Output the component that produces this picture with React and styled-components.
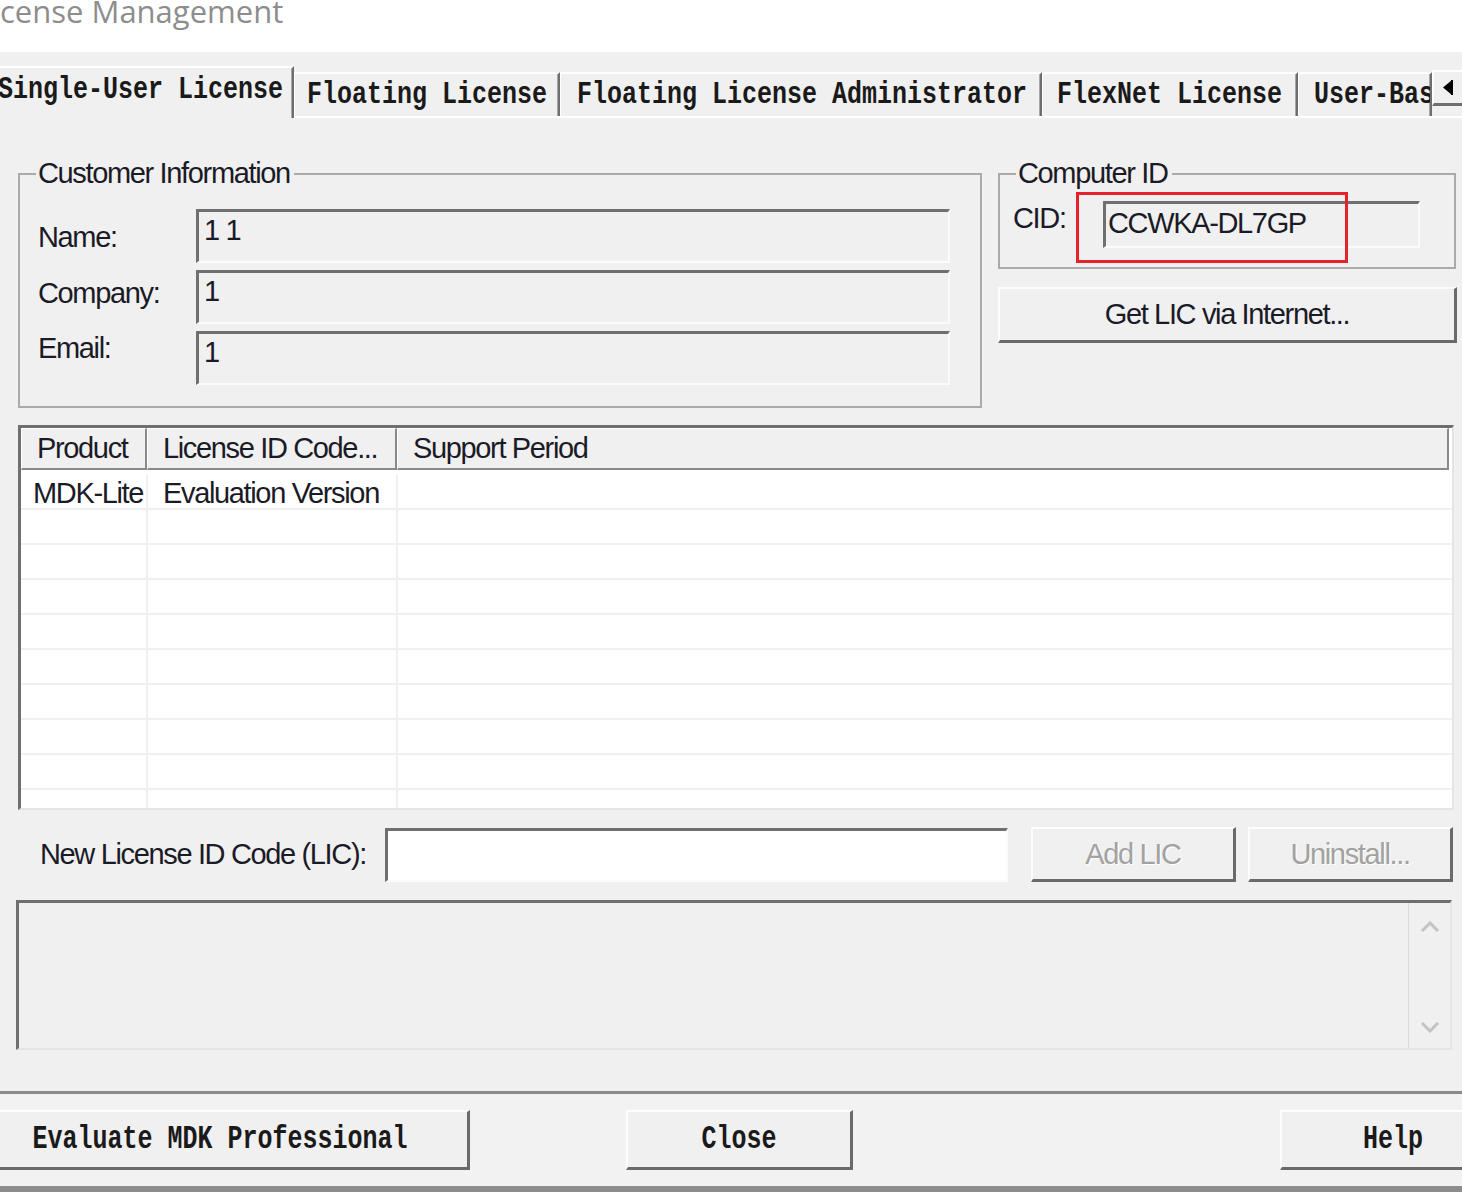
import React from 'react'
import styled, { createGlobalStyle } from 'styled-components'

const UI_FONT = '"Liberation Sans", Arial, sans-serif'
const RASTER_FONT = '"Liberation Mono", "Courier New", monospace'

const GlobalStyle = createGlobalStyle`
  html, body {
    margin: 0;
    padding: 0;
    background: #f0f0f0;
  }
  body {
    font-family: ${UI_FONT};
    overflow: hidden;
  }
`

const tabs = [
  { label: 'Single-User License', w: 306, pad: 9, active: true },
  { label: 'Floating License', w: 266, pad: 12 },
  { label: 'Floating License Administrator', w: 482, pad: 16 },
  { label: 'FlexNet License', w: 256, pad: 14 },
  { label: 'User-Based License', w: 134, pad: 15 }
]

const rows = [
  ['MDK-Lite', 'Evaluation Version', ''],
  ['', '', ''],
  ['', '', ''],
  ['', '', ''],
  ['', '', ''],
  ['', '', ''],
  ['', '', ''],
  ['', '', ''],
  ['', '', ''],
  ['', '', '']
]

const App = () => {
  return (
    <Page>
      <GlobalStyle />
      <TitleBar>
        <Title>cense Management</Title>
      </TitleBar>

      <TabStrip>
        {tabs.map(t => (
          <Tab key={t.label} $w={t.w} $pad={t.pad} $active={t.active}>
            <RasterText $sy={1.22}>{t.label}</RasterText>
          </Tab>
        ))}
        <TabScroll>
          <svg width="11" height="15" viewBox="0 0 11 15">
            <polygon points="10,0 10,15 1,7.5" fill="#000" />
            <rect x="9" y="0" width="2" height="15" fill="#000" />
          </svg>
        </TabScroll>
      </TabStrip>

      <Panel>
        <TopRow>
          <GroupBox $w={964} $pl={18} $pr={30} $pb={21}>
            <Legend $lm={-2}>Customer Information</Legend>
            <FormGrid>
              <FormRow>
                <FieldLabel $w={158} $dy={14}>Name:</FieldLabel>
                <Field $w={754} $h={54}>1 1</Field>
              </FormRow>
              <FormRow>
                <FieldLabel $w={158} $dy={9}>Company:</FieldLabel>
                <Field $w={754} $h={54}>1</Field>
              </FormRow>
              <FormRow>
                <FieldLabel $w={158} $dy={3}>Email:</FieldLabel>
                <Field $w={754} $h={54}>1</Field>
              </FormRow>
            </FormGrid>
          </GroupBox>

          <RightCol>
            <GroupBox $w={458} $pl={13} $pr={0} $pb={19}>
              <Legend $lm={3}>Computer ID</Legend>
              <CidRow>
                <FieldLabel $w={90} $dy={3}>CID:</FieldLabel>
                <CidWrap>
                  <Field $w={317} $h={47} $pt={5} $pl={2}>CCWKA-DL7GP</Field>
                  <Highlight />
                </CidWrap>
              </CidRow>
            </GroupBox>
            <Button $w={459} $h={56}>Get LIC via Internet...</Button>
          </RightCol>
        </TopRow>

        <ListView>
          <ListHeader>
            <HeaderCell $w={126}>Product</HeaderCell>
            <HeaderCell $w={250}>License ID Code...</HeaderCell>
            <HeaderCell $w={1052}>Support Period</HeaderCell>
          </ListHeader>
          <ListBody>
            {rows.map((r, i) => (
              <Row key={i} $first={i === 0}>
                <Cell $w={127} $pl={12}>{r[0]}</Cell>
                <Cell $w={250} $pl={15}>{r[1]}</Cell>
                <Cell $pl={15} $last>{r[2]}</Cell>
              </Row>
            ))}
          </ListBody>
        </ListView>

        <LicRow>
          <LicLabel>New License ID Code (LIC):</LicLabel>
          <Field $w={623} $h={54} $white />
          <Button $w={205} $h={55} $ml={23} disabled>Add LIC</Button>
          <Button $w={205} $h={55} $ml={12} disabled>Uninstall...</Button>
        </LicRow>

        <MessageBox>
          <MessageText />
          <ScrollBar>
            <svg width="20" height="12" viewBox="0 0 20 12">
              <polyline points="2,10 10,2 18,10" fill="none" stroke="#c3c3c3" strokeWidth="3" />
            </svg>
            <svg width="20" height="12" viewBox="0 0 20 12">
              <polyline points="2,2 10,10 18,2" fill="none" stroke="#c3c3c3" strokeWidth="3" />
            </svg>
          </ScrollBar>
        </MessageBox>
      </Panel>

      <Footer>
        <Button $w={499} $h={60} $ml={-29}>
          <RasterText $sy={1.32}>Evaluate MDK Professional</RasterText>
        </Button>
        <Button $w={227} $h={60} $ml={156}>
          <RasterText $sy={1.32}>Close</RasterText>
        </Button>
        <Button $w={227} $h={60} $ml={427}>
          <RasterText $sy={1.32}>Help</RasterText>
        </Button>
      </Footer>
    </Page>
  )
}

const Page = styled.div`
  width: 1462px;
  height: 1192px;
  overflow: hidden;
  display: flex;
  flex-direction: column;
  background: #f0f0f0;
  color: #1b1b27;
  font-size: 29px;
  line-height: 29px;
  letter-spacing: -1.35px;
`

const TitleBar = styled.div`
  flex: none;
  height: 52px;
  background: #fff;
  overflow: hidden;
`

const Title = styled.div`
  margin-top: -4px;
  font-family: "Open Sans", "Noto Sans", sans-serif;
  font-size: 31px;
  line-height: 31px;
  letter-spacing: 0;
  color: #8d8d8d;
  white-space: nowrap;
`

const TabStrip = styled.div`
  flex: none;
  display: flex;
  align-items: flex-end;
  height: 50px;
  margin: 14px 0 0 -12px;
  border-bottom: 2px solid #fff;
`

const Tab = styled.div`
  flex: none;
  box-sizing: border-box;
  width: ${p => p.$w}px;
  height: ${p => (p.$active ? 52 : 44)}px;
  margin-bottom: ${p => (p.$active ? -2 : 0)}px;
  padding: 0 0 ${p => (p.$active ? 6 : 0)}px ${p => p.$pad}px;
  display: flex;
  align-items: center;
  overflow: hidden;
  white-space: nowrap;
  background: #f0f0f0;
  border-top: 2px solid #fff;
  border-left: 1px solid #fff;
  border-right: 2px solid #6e6e6e;
  box-shadow: inset -1px 0 #a8a8a8;
`

const RasterText = styled.span`
  display: inline-block;
  font-family: ${RASTER_FONT};
  font-size: 25px;
  line-height: 25px;
  font-weight: 700;
  letter-spacing: 0;
  color: #1a1a1a;
  white-space: nowrap;
  transform: scaleY(${p => p.$sy || 1.2});
`

const TabScroll = styled.div`
  flex: none;
  align-self: flex-start;
  box-sizing: border-box;
  width: 30px;
  height: 36px;
  margin-top: 4px;
  padding-right: 2px;
  display: flex;
  align-items: center;
  justify-content: center;
  background: #f0f0f0;
  border-top: 2px solid #fff;
  border-left: 2px solid #fff;
  border-bottom: 3px solid #6e6e6e;
`

const Panel = styled.div`
  flex: none;
  box-sizing: border-box;
  height: 976px;
  padding: 41px 0 0 18px;
  display: flex;
  flex-direction: column;
  border-bottom: 3px solid #8a8a8a;
`

const TopRow = styled.div`
  display: flex;
  align-items: flex-start;
  gap: 16px;
`

const GroupBox = styled.fieldset`
  flex: none;
  box-sizing: border-box;
  width: ${p => p.$w}px;
  min-width: 0;
  margin: 0;
  padding: 0 ${p => p.$pr}px ${p => p.$pb}px ${p => p.$pl}px;
  border: 2px solid #aaaaaa;
  position: relative;
`

const Legend = styled.legend`
  margin-left: ${p => p.$lm}px;
  padding: 0 4px 0 2px;
  line-height: 29px;
`

const FormGrid = styled.div`
  margin-top: 21px;
  display: flex;
  flex-direction: column;
  gap: 7px;
`

const FormRow = styled.div`
  display: flex;
  align-items: flex-start;
`

const FieldLabel = styled.div`
  flex: none;
  width: ${p => p.$w}px;
  margin-top: ${p => p.$dy}px;
  white-space: nowrap;
`

const Field = styled.div`
  flex: none;
  box-sizing: border-box;
  width: ${p => p.$w}px;
  height: ${p => p.$h}px;
  padding: ${p => p.$pt ?? 4}px 0 0 ${p => p.$pl ?? 5}px;
  background: ${p => (p.$white ? '#fff' : '#f0f0f0')};
  border-style: solid;
  border-width: 3px 2px 2px 3px;
  border-color: #6f6f6f #fbfbfb #fbfbfb #6f6f6f;
  white-space: nowrap;
  overflow: hidden;
`

const RightCol = styled.div`
  flex: none;
  width: 460px;
  display: flex;
  flex-direction: column;
  gap: 18px;
`

const CidRow = styled.div`
  margin-top: 13px;
  display: flex;
  align-items: flex-start;
`

const CidWrap = styled.div`
  position: relative;
`

const Highlight = styled.div`
  position: absolute;
  left: -27px;
  top: -9px;
  width: 272px;
  height: 71px;
  box-sizing: border-box;
  border: 3px solid #e5222b;
  pointer-events: none;
`

const Button = styled.button`
  flex: none;
  box-sizing: border-box;
  width: ${p => p.$w}px;
  height: ${p => p.$h}px;
  margin: 0 0 0 ${p => p.$ml || 0}px;
  padding: 0;
  display: flex;
  align-items: center;
  justify-content: center;
  font: inherit;
  letter-spacing: inherit;
  white-space: nowrap;
  color: ${p => (p.disabled ? '#a2a2a2' : '#1b1b27')};
  text-shadow: ${p => (p.disabled ? '1px 1px 0 #fff' : 'none')};
  background: #f0f0f0;
  border-style: solid;
  border-width: 2px 3px 3px 2px;
  border-color: #fdfdfd #6a6a6a #6a6a6a #fdfdfd;
`

const ListView = styled.div`
  flex: none;
  box-sizing: border-box;
  width: 1436px;
  height: 385px;
  margin-top: 17px;
  display: flex;
  flex-direction: column;
  overflow: hidden;
  background: #fff;
  border-style: solid;
  border-width: 3px 2px 2px 3px;
  border-color: #6f6f6f #e4e4e4 #e4e4e4 #6f6f6f;
`

const ListHeader = styled.div`
  flex: none;
  display: flex;
`

const HeaderCell = styled.div`
  flex: none;
  box-sizing: border-box;
  width: ${p => p.$w}px;
  height: 42px;
  padding-left: 15px;
  display: flex;
  align-items: center;
  white-space: nowrap;
  background: #f0f0f0;
  border-top: 1px solid #fff;
  border-left: 1px solid #fff;
  border-right: 2px solid #8a8a8a;
  border-bottom: 2px solid #8a8a8a;
`

const ListBody = styled.div`
  flex: 1;
  overflow: hidden;
`

const Row = styled.div`
  box-sizing: border-box;
  height: ${p => (p.$first ? 40 : 35)}px;
  padding-top: ${p => (p.$first ? 5 : 0)}px;
  display: flex;
  border-bottom: 2px solid #f0f0f0;
`

const Cell = styled.div`
  flex: ${p => (p.$last ? 1 : 'none')};
  box-sizing: border-box;
  width: ${p => (p.$w ? `${p.$w}px` : 'auto')};
  padding: 3px 0 0 ${p => p.$pl}px;
  display: flex;
  align-items: center;
  white-space: nowrap;
  border-right: ${p => (p.$last ? 'none' : '2px solid #f0f0f0')};
`

const LicRow = styled.div`
  margin-top: 17px;
  display: flex;
  align-items: center;
`

const LicLabel = styled.div`
  flex: none;
  width: 345px;
  margin-left: 22px;
  white-space: nowrap;
`

const MessageBox = styled.div`
  flex: none;
  box-sizing: border-box;
  width: 1436px;
  height: 150px;
  margin: 18px 0 0 -2px;
  display: flex;
  background: #f0f0f0;
  border-style: solid;
  border-width: 3px 2px 2px 3px;
  border-color: #6f6f6f #e4e4e4 #e4e4e4 #6f6f6f;
`

const MessageText = styled.div`
  flex: 1;
`

const ScrollBar = styled.div`
  flex: none;
  box-sizing: border-box;
  width: 42px;
  padding: 18px 0 15px;
  display: flex;
  flex-direction: column;
  align-items: center;
  justify-content: space-between;
  border-left: 1px solid #dadada;
`

const Footer = styled.div`
  flex: none;
  box-sizing: border-box;
  height: 98px;
  padding-top: 16px;
  display: flex;
  align-items: flex-start;
  background: #f2f2f2;
  border-bottom: 6px solid #8c8c8c;
`

export default App
